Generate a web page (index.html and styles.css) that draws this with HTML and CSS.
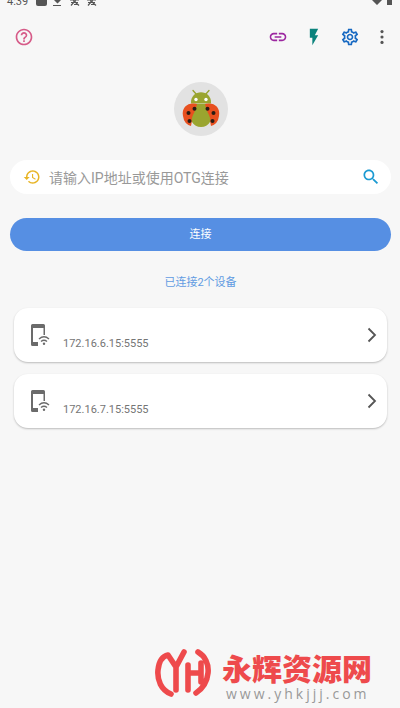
FILE: index.html
```html
<!DOCTYPE html>
<html lang="zh-CN">
<head>
<meta charset="utf-8">
<meta name="viewport" content="width=device-width, initial-scale=1">
<title>连接</title>
<link rel="stylesheet" href="styles.css">
</head>
<body>
<div class="status">
  <span class="clock">4:39</span>
  <svg class="status-left" viewBox="0 0 64 7" aria-hidden="true">
    <rect x="2" y="-6" width="11" height="12" rx="2"/>
    <path d="M20 0h7l-3.500 3.500zM19 5h8v1h-8zM23 -3h1v4h-1z"/>
    <g class="status-line">
      <path d="M36 0h9M37 2.500h7M39 -3l1 5-3 3.500M42 -3l-1 5 4 3.500M40 4.500h4"/>
      <path d="M53 0h9M54 2.500h7M56 -3l1 5-3 3.500M59 -3l-1 5 4 3.500M57 4.500h4"/>
    </g>
  </svg>
  <svg class="status-right" viewBox="0 0 24 7" aria-hidden="true">
    <path d="M0 -1h12L6 5zM16 -7h5V5h-5z"/>
  </svg>
</div>

<header class="toolbar">
  <button class="icon help" aria-label="帮助">
    <svg viewBox="0 0 24 24"><path d="M11 18h2v-2h-2v2zm1-16C6.480 2 2 6.480 2 12s4.480 10 10 10 10-4.480 10-10S17.520 2 12 2zm0 18c-4.410 0-8-3.590-8-8s3.590-8 8-8 8 3.590 8 8-3.590 8-8 8zm0-14c-2.210 0-4 1.790-4 4h2c0-1.100.9-2 2-2s2 .9 2 2c0 2-3 1.750-3 5h2c0-2.250 3-2.500 3-5 0-2.210-1.790-4-4-4z"/></svg>
  </button>
  <div class="actions">
    <button class="icon link" aria-label="链接">
      <svg viewBox="0 0 24 24"><path d="M3.900 12c0-1.710 1.390-3.100 3.100-3.100h4V7H7c-2.760 0-5 2.240-5 5s2.240 5 5 5h4v-1.900H7c-1.710 0-3.100-1.390-3.100-3.100zM8 13h8v-2H8v2zm9-6h-4v1.900h4c1.710 0 3.100 1.390 3.100 3.100s-1.390 3.100-3.100 3.100h-4V17h4c2.760 0 5-2.240 5-5s-2.240-5-5-5z"/></svg>
    </button>
    <button class="icon flash" aria-label="快速">
      <svg viewBox="0 0 24 24"><path d="M7 2v11h3v9l7-12h-4l4-8z"/></svg>
    </button>
    <button class="icon gear" aria-label="设置">
      <svg viewBox="0 0 24 24"><path d="M19.430 12.980c.04-.32.07-.64.07-.98 0-.34-.03-.66-.07-.98l2.110-1.650c.19-.15.24-.42.12-.64l-2-3.460c-.09-.16-.26-.25-.44-.25-.06 0-.12.010-.17.030l-2.490 1c-.52-.4-1.080-.73-1.690-.98l-.38-2.650C14.460 2.180 14.250 2 14 2h-4c-.25 0-.46.18-.49.42l-.38 2.650c-.61.25-1.170.59-1.690.98l-2.490-1c-.06-.02-.12-.03-.18-.03-.17 0-.34.09-.43.25l-2 3.460c-.13.22-.07.49.12.64l2.110 1.650c-.04.32-.07.65-.07.98 0 .33.030.66.070.98l-2.110 1.650c-.19.15-.24.42-.12.64l2 3.460c.09.16.26.25.44.25.06 0 .12-.01.17-.03l2.490-1c.52.4 1.080.73 1.690.98l.38 2.650c.03.24.24.42.49.42h4c.25 0 .46-.18.49-.42l.38-2.650c.61-.25 1.170-.59 1.690-.98l2.490 1c.06.020.12.030.18.030.17 0 .34-.09.43-.25l2-3.460c.12-.22.07-.49-.12-.64l-2.110-1.650zm-1.980-1.710c.04.31.050.52.050.73 0 .21-.02.43-.05.73l-.14 1.130.89.7 1.080.84-.7 1.210-1.270-.51-1.040-.42-.9.68c-.43.32-.84.56-1.250.73l-1.060.43-.16 1.130-.2 1.350h-1.400l-.19-1.350-.16-1.130-1.060-.43c-.43-.18-.83-.41-1.230-.71l-.91-.7-1.060.43-1.270.51-.7-1.210 1.080-.84.89-.7-.14-1.130c-.03-.31-.05-.54-.05-.74s.02-.43.050-.73l.14-1.130-.89-.7-1.080-.84.7-1.210 1.270.51 1.040.42.9-.68c.43-.32.84-.56 1.250-.73l1.060-.43.16-1.130.2-1.350h1.390l.19 1.350.16 1.130 1.060.43c.43.18.83.41 1.230.71l.91.7 1.060-.43 1.270-.51.7 1.210-1.070.85-.89.7.14 1.130zM12 8c-2.210 0-4 1.790-4 4s1.790 4 4 4 4-1.790 4-4-1.790-4-4-4zm0 6c-1.100 0-2-.9-2-2s.9-2 2-2 2 .9 2 2-.9 2-2 2z"/></svg>
    </button>
    <button class="icon more" aria-label="更多">
      <svg viewBox="0 0 24 24"><circle cx="12" cy="5.500" r="1.900"/><circle cx="12" cy="12" r="1.900"/><circle cx="12" cy="18.500" r="1.900"/></svg>
    </button>
  </div>
</header>

<main>
  <svg class="avatar" viewBox="0 0 54 54" role="img" aria-label="瓢虫">
    <circle cx="27" cy="27" r="27" fill="#e2e2e2"/>
    <path d="M19 8.500l3.500 4M35 8.500l-3.500 4" stroke="#96a12c" stroke-width="1.300" stroke-linecap="round"/>
    <path d="M17 21.500C16 6.500 38 6.500 37 21.500z" fill="#9aa52f"/>
    <circle cx="22" cy="17.500" r="1.700" fill="#fff"/><circle cx="32" cy="17.500" r="1.700" fill="#fff"/>
    <path d="M24.500 22.500C16 19 7 24 9 34q1 8 8 10 1-8 5-13 3-4 2.500-8.500zM29.500 22.500c8.500-3.500 17.500 1.500 15.500 11.500q-1 8-8 10-1-8-5-13-3-4-2.500-8.500z" fill="#e8501f"/>
    <path d="M23 22h8q1 5 3 9 3 5 2 9-3 5-9 5t-9-5q-1-4 2-9 2-4 3-9z" fill="#9aa52f"/>
    <g fill="#281c14"><circle cx="20.500" cy="26.700" r="2"/><circle cx="14.500" cy="31" r="2"/><circle cx="15.500" cy="39" r="2"/><circle cx="33.500" cy="26.700" r="2"/><circle cx="39.500" cy="31" r="2"/><circle cx="38.500" cy="39" r="2"/></g>
  </svg>

  <form class="connect">
    <div class="search">
      <svg class="history" viewBox="0 0 24 24" aria-hidden="true"><path d="M13 3c-4.970 0-9 4.030-9 9H1l3.890 3.890.07.14L9 12H6c0-3.870 3.130-7 7-7s7 3.130 7 7-3.130 7-7 7c-1.930 0-3.680-.79-4.940-2.060l-1.420 1.420C8.270 19.990 10.510 21 13 21c4.970 0 9-4.030 9-9s-4.030-9-9-9zm-1 5v5l4.280 2.540.72-1.210-3.500-2.080V8H12z"/></svg>
      <input type="text" aria-label="IP地址" placeholder="请输入IP地址或使用OTG连接">
      <button type="button" class="icon find" aria-label="搜索">
        <svg viewBox="0 0 24 24"><path d="M15.500 14h-.79l-.28-.27C15.410 12.590 16 11.110 16 9.500 16 5.910 13.090 3 9.500 3S3 5.910 3 9.500 5.910 16 9.500 16c1.610 0 3.090-.59 4.230-1.570l.27.28v.79l5 4.990L20.490 19l-4.990-5zm-6 0C7.010 14 5 11.990 5 9.500S7.010 5 9.500 5 14 7.010 14 9.500 11.990 14 9.500 14z"/></svg>
      </button>
    </div>
    <button type="button" class="submit">连接</button>
  </form>

  <p class="count">已连接2个设备</p>

  <div class="devices">
    <a class="device" href="#">
      <svg class="phone" viewBox="0 0 20 24" aria-hidden="true"><path d="M1 2.500Q1 1 2.500 1h11Q15 1 15 2.500V12h-1.500V5H3v14h5v4H2.500Q1 23 1 21.500z"/><path class="wave" d="M9 16q5-4.500 10 0M11 18.500q3-2.500 6 0"/><circle cx="14" cy="20.800" r="1.200"/></svg>
      <span class="address">172.16.6.15:5555</span>
      <svg class="chevron" viewBox="0 0 10 16" aria-hidden="true"><path d="M1.500 1.500L8 8l-6.500 6.500"/></svg>
    </a>
    <a class="device" href="#">
      <svg class="phone" viewBox="0 0 20 24" aria-hidden="true"><path d="M1 2.500Q1 1 2.500 1h11Q15 1 15 2.500V12h-1.500V5H3v14h5v4H2.500Q1 23 1 21.500z"/><path class="wave" d="M9 16q5-4.500 10 0M11 18.500q3-2.500 6 0"/><circle cx="14" cy="20.800" r="1.200"/></svg>
      <span class="address">172.16.7.15:5555</span>
      <svg class="chevron" viewBox="0 0 10 16" aria-hidden="true"><path d="M1.500 1.500L8 8l-6.500 6.500"/></svg>
    </a>
  </div>
</main>

<footer class="brand">
  <svg class="logo" viewBox="0 0 56 50" aria-hidden="true"><path d="M43 4C50 8 54 16 53 25 52 35 47 41 41 45M16 46C6 42 2 32 3 22 4 13 8 8 13 7L21 19M29 4L21 19V42M33 17V42M33 25H46M46 15V34"/></svg>
  <div class="brand-text">
    <strong>永辉资源网</strong>
    <span>www.yhkjjj.com</span>
  </div>
</footer>
</body>
</html>
```
FILE: styles.css
```css
* {
  box-sizing: border-box;
}

body {
  display: flex;
  flex-direction: column;
  min-height: 100vh;
  margin: 0;
  background: #f7f7f7;
  color: #757575;
  font-family: Roboto, "Noto Sans CJK SC", sans-serif;
}

button {
  border: 0;
  padding: 0;
  background: none;
  font: inherit;
}

svg {
  display: block;
  flex: none;
}

.status {
  display: flex;
  align-items: flex-end;
  height: 7px;
  padding: 0 5px 0 7px;
  fill: #555;
}

.clock {
  color: #555;
  font-size: 11px;
  line-height: 10px;
}

.status-left {
  width: 64px;
  height: 7px;
  margin-left: 6px;
}

.status-line {
  fill: none;
  stroke: #555;
  stroke-width: 1.2;
}

.status-right {
  width: 24px;
  height: 7px;
  margin-left: auto;
}

.toolbar {
  display: flex;
  align-items: center;
  justify-content: space-between;
  height: 60px;
  padding: 0 9px 0 15px;
}

.actions {
  display: flex;
  gap: 18px;
}

.icon svg {
  width: 18px;
  height: 18px;
  fill: currentColor;
}

.help { color: #d65b88; }
.link { color: #9c27a0; }
.flash { color: #0b827c; }
.gear { color: #1769c2; }
.more { color: #555; }
.find { color: #1b9ad2; }

.toolbar .icon {
  margin: 0 -1px;
}

.toolbar .icon svg {
  width: 20px;
  height: 20px;
}

.toolbar .more {
  margin-left: -5px;
}

main {
  display: flex;
  flex-direction: column;
  padding: 15px 9px 0 10px;
}

.avatar {
  width: 54px;
  height: 54px;
  align-self: center;
}

.connect {
  display: flex;
  flex-direction: column;
  gap: 24px;
  margin-top: 24px;
}

.search {
  display: flex;
  align-items: center;
  gap: 8px;
  height: 34px;
  padding: 0 10px 0 13px;
  border-radius: 17px;
  background: #fff;
}

.history {
  width: 18px;
  height: 18px;
  fill: #e8b527;
}

.search input {
  flex: 1;
  min-width: 0;
  border: 0;
  padding: 2px 0 0;
  background: none;
  color: #555;
  font: inherit;
  font-size: 14px;
  outline: 0;
}

.search input::placeholder {
  color: #999;
}

.search .icon svg {
  width: 20px;
  height: 20px;
}

.submit {
  height: 33px;
  padding-bottom: 3px;
  border-radius: 17px;
  background: #568fe3;
  color: #fff;
  font-size: 11px;
}

.count {
  margin: 24px 0 17px;
  color: #619be2;
  font-size: 11px;
  line-height: 16px;
  text-align: center;
}

.devices {
  display: flex;
  flex-direction: column;
  gap: 12px;
  padding: 0 4px;
}

.device {
  display: flex;
  align-items: center;
  height: 54px;
  padding: 0 10px 0 16px;
  border-radius: 14px;
  background: #fff;
  box-shadow: 0 1px 2px #bbb;
  color: #757575;
  text-decoration: none;
}

.phone {
  width: 20px;
  height: 24px;
  fill: #6b6b6b;
}

.wave {
  fill: none;
  stroke: #6b6b6b;
  stroke-width: 1.4;
}

.address {
  flex: 1;
  padding: 18px 0 0 13px;
  font-size: 11px;
  line-height: 16px;
}

.chevron {
  width: 10px;
  height: 16px;
  fill: none;
  stroke: #555;
  stroke-width: 1.8;
}

.brand {
  display: flex;
  align-items: flex-start;
  justify-content: flex-end;
  gap: 11px;
  margin-top: auto;
  padding: 16px 28px 6px 0;
}

.logo {
  width: 56px;
  height: 50px;
  fill: none;
  stroke: #ee4a4c;
  stroke-width: 5.6;
  stroke-linecap: round;
  stroke-linejoin: round;
}

.brand-text {
  display: flex;
  flex-direction: column;
}

.brand strong {
  color: #ee4a4c;
  font-family: "Noto Sans CJK SC", sans-serif;
  font-size: 30px;
  font-weight: 900;
  line-height: 38px;
}

.brand span {
  padding-left: 4px;
  color: #999;
  font-family: "Open Sans", sans-serif;
  font-size: 14px;
  letter-spacing: 3px;
  line-height: 16px;
}
```
